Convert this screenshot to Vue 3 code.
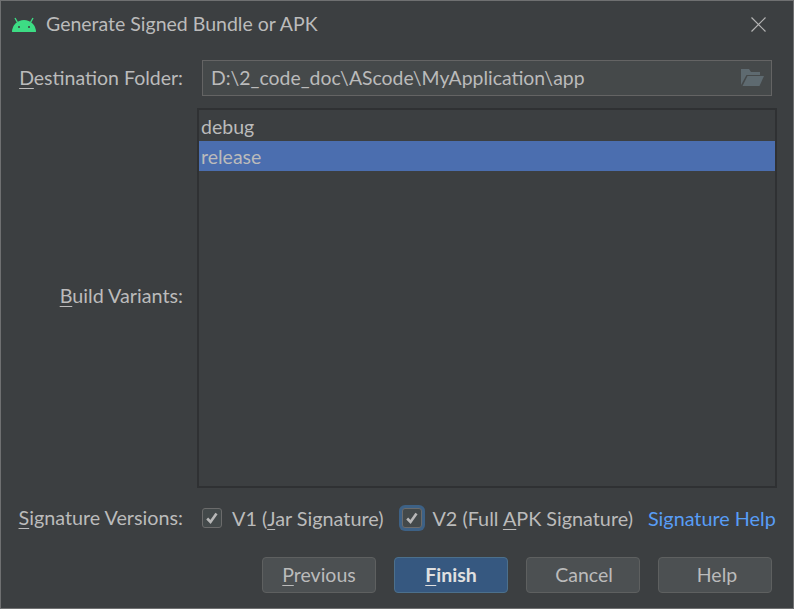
<template>
  <div class="dialog">
    <div class="title-bar">
      <svg class="android" viewBox="0 0 24 15" width="24" height="15">
        <path d="M0 15a12 12 0 0 1 24 0z" fill="#3ddc84" />
        <path d="M5.500 5.500 3 1M18.500 5.500 21 1" stroke="#3ddc84" stroke-width="1.400" fill="none" />
        <circle cx="7" cy="10" r="1" fill="#3c3f41" />
        <circle cx="17" cy="10" r="1" fill="#3c3f41" />
      </svg>
      <span class="title">Generate Signed Bundle or APK</span>
      <svg class="close" viewBox="0 0 15 15" width="15" height="15">
        <path d="M.5.5l14 14M14.500.5l-14 14" stroke="#b4b4b4" stroke-width="1.200" fill="none" />
      </svg>
    </div>

    <div class="form">
      <label class="label"><u>D</u>estination Folder:</label>
      <div class="field">
        <span>{{ destination }}</span>
        <svg viewBox="0 0 24 18" width="24" height="18">
          <path d="M1 17V1h8l2 3h9v3H6.500L1 17z" fill="#5e6a70" />
          <path d="M7.500 8H24l-4.500 10H2.500z" fill="#5e6a70" />
        </svg>
      </div>

      <label class="label variants-label"><u>B</u>uild Variants:</label>
      <ul class="variants">
        <li v-for="v in variants" :key="v" :class="{ selected: v === 'release' }">{{ v }}</li>
      </ul>

      <label class="label sig-label"><u>S</u>ignature Versions:</label>
      <div class="signatures">
        <span class="check-item">
          <span class="box">
            <svg viewBox="0 0 14 14" width="14" height="14"><path d="M2.200 7.500l3.300 3.500 6-8.500" stroke="#b8b8b8" stroke-width="2.600" fill="none" /></svg>
          </span>
          <span>V1 (<u>J</u>ar Signature)</span>
        </span>
        <span class="check-item second">
          <span class="box focused">
            <svg viewBox="0 0 14 14" width="14" height="14"><path d="M2.200 7.500l3.300 3.500 6-8.500" stroke="#b8b8b8" stroke-width="2.600" fill="none" /></svg>
          </span>
          <span>V2 (Full <u>A</u>PK Signature)</span>
        </span>
        <a class="help-link">Signature Help</a>
      </div>
    </div>

    <div class="buttons">
      <button><u>P</u>revious</button>
      <button class="primary"><u>F</u>inish</button>
      <button class="cancel">Cancel</button>
      <button class="help">Help</button>
    </div>
  </div>
</template>

<script setup>
const destination = 'D:\\2_code_doc\\AScode\\MyApplication\\app'
const variants = ['debug', 'release']
</script>

<style scoped>
.dialog {
  width: 794px;
  height: 609px;
  box-sizing: border-box;
  border: 1px solid #6f7071;
  background: #3c3f41;
  color: #bbbbbb;
  font-family: Lato, "Open Sans", sans-serif;
  font-size: 19.500px;
  display: flex;
  flex-direction: column;
}

u {
  text-underline-offset: 3px;
  text-decoration-thickness: 1px;
}

.title-bar {
  height: 47px;
  display: flex;
  align-items: center;
  padding: 0 27px 0 11px;
  flex-shrink: 0;
}

.title {
  margin-left: 10px;
  flex: 1;
  padding-bottom: 3px;
}

.form {
  display: grid;
  grid-template-columns: 182px 1fr;
  grid-template-rows: 36px 380px 36px;
  row-gap: 12px;
  margin-top: 12px;
  padding-right: 16px;
  align-items: center;
}

.label {
  text-align: right;
  padding-bottom: 2px;
}

.variants-label {
  padding-bottom: 6px;
  font-size: 19.750px;
}

.sig-label {
  font-size: 19.750px;
}

.field {
  margin: 0 5px 0 19px;
  height: 36px;
  box-sizing: border-box;
  border: 1px solid #646464;
  background: #45494a;
  display: flex;
  align-items: center;
  justify-content: space-between;
  padding: 0 7px 2px 8px;
  font-size: 19.400px;
}

.variants {
  list-style: none;
  margin: 0 0 0 14px;
  padding: 1px 0 0;
  height: 380px;
  box-sizing: border-box;
  border: 2px solid #2f3133;
}

.variants li {
  height: 30px;
  line-height: 32px;
  padding-left: 2px;
}

.variants li.selected {
  background: #4b6eaf;
}

.signatures {
  display: flex;
  align-items: center;
  padding-left: 19px;
  white-space: nowrap;
  font-size: 19.800px;
}

.check-item {
  display: flex;
  align-items: center;
  gap: 10px;
}

.check-item.second {
  margin-left: 19px;
}

.box {
  width: 20px;
  height: 20px;
  box-sizing: border-box;
  border: 1px solid #6b6b6b;
  border-radius: 3px;
  background: #43494a;
  display: flex;
  align-items: center;
  justify-content: center;
}

.box.focused {
  box-shadow: 0 0 0 3px #3d6185;
}

.help-link {
  margin-left: 15px;
  color: #589df6;
}

.buttons {
  display: flex;
  justify-content: flex-end;
  gap: 18px;
  margin-top: 21px;
  padding-right: 21px;
}

button {
  width: 114px;
  height: 36px;
  box-sizing: border-box;
  border: 1px solid #5e6060;
  border-radius: 4px;
  background: #4c5052;
  color: #bbbbbb;
  font: inherit;
  padding: 0 0 2px;
}

button.cancel {
  padding-left: 2px;
}

button.help {
  padding-left: 4px;
}

button.primary {
  background: #365880;
  border-color: #4c708c;
  color: #e0e0e0;
  font-weight: 700;
}
</style>
